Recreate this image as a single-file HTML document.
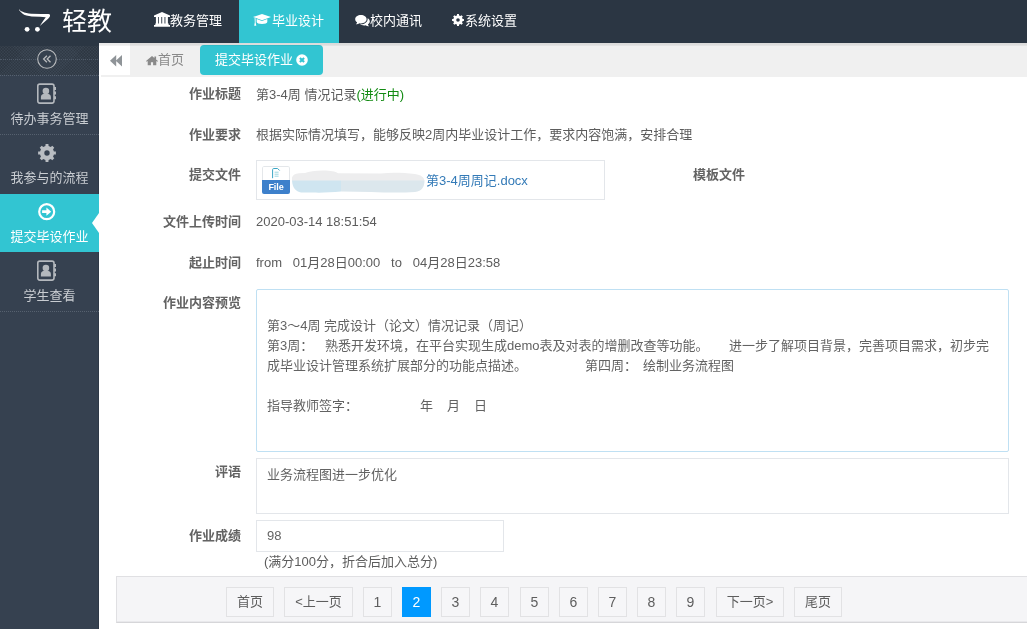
<!DOCTYPE html>
<html lang="zh-CN">
<head>
<meta charset="utf-8">
<title>轻教</title>
<style>
*{box-sizing:border-box;margin:0;padding:0}
html,body{width:1027px;height:629px;overflow:hidden;background:#fff}
body{will-change:transform;font-family:"Liberation Sans","Noto Sans CJK SC",sans-serif;font-size:13px;color:#555;position:relative}
svg{display:block;position:absolute;overflow:visible}
/* header */
#hdr{position:absolute;left:0;top:0;width:1027px;height:43px;background:#2b3643}
#logo{position:absolute;left:62px;top:1px;height:43px;line-height:41px;font-size:25px;color:#fff}
.nav{position:absolute;top:0;height:43px;color:#fff;font-size:13px;white-space:nowrap}
.nav span{position:absolute;top:0;line-height:41px}
.nav.on{background:#32c5d2}
/* sidebar */
#side{position:absolute;left:0;top:43px;width:99px;height:586px;background:#364150}
#side .edge{position:absolute;left:98px;top:0;width:1px;height:586px;background:#2f3947}
.sitem{position:absolute;left:0;width:99px;height:59px;border-bottom:1px dotted #56616f;color:#c8ccd1;text-align:center;font-size:13px}
.sitem .t{position:absolute;left:0;width:99px;top:33px;line-height:20px;white-space:nowrap}
.sitem.on{background:#32c5d2;color:#fff;border-bottom:none;height:58px}
.sitem.on:after{content:"";position:absolute;right:0;top:19px;border-right:7px solid #fff;border-top:10.5px solid transparent;border-bottom:10.5px solid transparent}
/* tabs */
#tabs{position:absolute;left:99px;top:43px;width:928px;height:34px;background:#f0f0f0}
#tabs:after{content:"";position:absolute;left:0;top:32px;width:2px;height:2px;background:#fff}
#tabs .sh{position:absolute;left:0;top:0;width:928px;height:3px;z-index:3;background:linear-gradient(rgba(0,0,0,.09) 0,rgba(0,0,0,.08) 67%,rgba(0,0,0,.03) 100%)}
#tabs .back{position:absolute;left:0;top:0;width:31px;height:32px;background:#fff}
#tabs .home{position:absolute;left:59px;top:2px;line-height:30px;color:#8a8a8a;font-size:13px;white-space:nowrap}
#tabs .act{position:absolute;left:101px;top:2px;width:123px;height:30px;border-radius:4px;background:#32c5d2;color:#fff;line-height:29px;padding-left:15px;font-size:13px;white-space:nowrap}
/* form */
.lbl{position:absolute;left:100px;width:141px;text-align:right;font-weight:bold;color:#636363;font-size:13px;line-height:20px;white-space:nowrap}
.val{position:absolute;left:256px;color:#5c5c5c;font-size:13px;line-height:20px;white-space:nowrap}
.box{position:absolute;border:1px solid #e3e6ea;background:#fff}
.box .ln{position:absolute;white-space:nowrap;line-height:20px;font-size:13px;color:#636363}
/* pager */
#pager{position:absolute;left:116px;top:576px;width:911px;height:47px;background:#f5f5f7;border:1px solid #e0e0e3;border-right:none;border-bottom-color:#d6d6d9;box-shadow:inset 0 -1px 0 #e9e9ec}
.pg{position:absolute;top:587px;height:30px;line-height:28px;border:1px solid #e2e2e4;background:#f6f6f8;color:#5e5e5e;font-size:13px;text-align:center;white-space:nowrap}
.pg.on{background:#0099ff;border-color:#0099ff;color:#fff}
.pg.n{font-size:14px;line-height:29px}
</style>
</head>
<body>
<div id="hdr">
  <svg style="left:14px;top:4px" width="44" height="34" viewBox="14 4 44 34"><path fill="#fff" d="M18.9 8.9 C20 10.3 21 11 22.1 11.5 C23.5 12.3 25 12.7 26.4 13 C28 13.4 29.8 13.6 31.3 13.7 L41 13.9 L47.3 13.9 C49 13.9 50.2 14.3 50.1 15.3 C50 16 49.9 16.4 49.6 17 C48.8 18.2 47.5 19.3 46.4 20.3 L39.8 26 C41 24.3 42.2 22.5 43.2 20.8 C44.2 19.4 45.3 18.2 45.7 17.3 C44 16.9 42 16.8 39.9 16.7 L31.8 16.4 C30 16.3 28.2 16.1 26.4 15.6 C24.8 15.1 23.3 14.3 22.1 13.2 C21 12.3 20 11.4 19.4 10.5 C19.1 10 18.9 9.4 18.9 8.9Z"/><circle cx="27.1" cy="29.3" r="2.4" fill="#fff"/><circle cx="37.4" cy="29.3" r="2.4" fill="#fff"/></svg>
  <div id="logo">轻教</div>

  <div class="nav" style="left:139px;width:100px">
    <svg style="left:14.8px;top:12.4px" width="16" height="15" viewBox="0 0 16 15"><path fill="#fff" d="M8 0 L16 3.6 V5 H0 V3.6Z M1.9 5 H4.2 V11.6 H1.9Z M5 5 H7.3 V11.6 H5Z M8.2 5 H10.5 V11.6 H8.2Z M11.4 5 H13.9 V11.6 H11.4Z M1.3 11.6 H14.7 V13.1 H1.3Z M0 13.1 H16 V14.7 H0Z"/></svg>
    <span style="left:31px">教务管理</span></div>
  <div class="nav on" style="left:239px;width:100px">
    <svg style="left:13.8px;top:14px" width="18" height="12" viewBox="0 0 18 12"><path fill="#fff" d="M9 0 L18 3 L9 6.2 L0 3Z M3.7 5 L9 6.9 L14.3 5 V8 C14.3 9.3 12 10 9 10 C6 10 3.7 9.3 3.7 8Z M1.6 4 L2.6 4.3 V8.2 L3.3 11.8 H1.2 L1.8 8.2Z"/></svg>
    <span style="left:33px">毕业设计</span></div>
  <div class="nav" style="left:339px;width:97px">
    <svg style="left:15.5px;top:14.6px" width="15" height="12" viewBox="0 0 15 12"><path fill="#fff" d="M5.9 0 C9.1 0 11.6 1.9 11.6 4.2 C11.6 6.5 9.1 8.4 5.9 8.4 C5.3 8.4 4.8 8.3 4.3 8.2 C3.5 8.8 2.3 9.3 1 9.3 C1.6 8.8 2 8.1 2.1 7.3 C0.9 6.5 0.2 5.4 0.2 4.2 C0.2 1.9 2.7 0 5.9 0Z M12.6 3.2 C13.9 3.9 14.8 5 14.8 6.3 C14.8 7.5 14.1 8.6 12.9 9.3 C13 10.1 13.4 10.8 14 11.3 C12.7 11.3 11.5 10.8 10.7 10.2 C10.2 10.3 9.7 10.4 9.1 10.4 C7.5 10.4 6.1 9.9 5.1 9.2 C5.4 9.2 5.6 9.3 5.9 9.3 C9.6 9.3 12.6 7 12.6 4.2 C12.6 3.9 12.6 3.5 12.6 3.2Z"/></svg>
    <span style="left:31px">校内通讯</span></div>
  <div class="nav" style="left:436px;width:97px">
    <svg style="left:15.9px;top:14.2px" width="12" height="12" viewBox="0 0 20 20"><path fill="#fff" fill-rule="evenodd" d="M17.70 8.22 L19.88 8.44 L19.88 11.56 L17.70 11.78 L16.70 14.18 L18.09 15.88 L15.88 18.09 L14.18 16.70 L11.78 17.70 L11.56 19.88 L8.44 19.88 L8.22 17.70 L5.82 16.70 L4.12 18.09 L1.91 15.88 L3.30 14.18 L2.30 11.78 L0.12 11.56 L0.12 8.44 L2.30 8.22 L3.30 5.82 L1.91 4.12 L4.12 1.91 L5.82 3.30 L8.22 2.30 L8.44 0.12 L11.56 0.12 L11.78 2.30 L14.18 3.30 L15.88 1.91 L18.09 4.12 L16.70 5.82Z M7.00 10.00 a3.00 3.00 0 1 0 6.00 0 a3.00 3.00 0 1 0 -6.00 0Z"/></svg>
    <span style="left:29px">系统设置</span></div>
</div>

<div id="side">
  <div class="edge"></div>
  <div class="sitem" style="top:0;height:33px"><div style="position:absolute;left:0;top:0;width:99px;height:3px;background:#2b3643"></div><div style="position:absolute;left:0;top:3px;width:98px;height:29px;background:#36414e;background-image:repeating-linear-gradient(45deg,rgba(0,0,0,.08) 0 1px,rgba(255,255,255,.012) 1px 2.1px),repeating-linear-gradient(-45deg,rgba(0,0,0,.08) 0 1px,rgba(255,255,255,.012) 1px 2.1px)"></div><div style="position:absolute;left:0;top:16px;width:98px;height:0;border-top:1px dotted #4f5a68"></div>
    <svg style="left:37px;top:6px" width="20" height="20" viewBox="0 0 20 20"><circle cx="10" cy="10" r="9.3" fill="#36414e" stroke="#b9bbbd" stroke-width="1.1"/><path d="M9.9 6.7 L6.6 10 L9.9 13.3 M13.5 6.7 L10.2 10 L13.5 13.3" fill="none" stroke="#b9bbbd" stroke-width="1.3"/></svg>
  </div>
  <div class="sitem" style="top:33px">
    <svg style="left:37px;top:7px" width="20" height="22" viewBox="0 0 20 22"><rect x="0.8" y="1.1" width="16.2" height="19" rx="2" fill="none" stroke="#b4b8bd" stroke-width="1.6"/><path fill="#b4b8bd" d="M17 4 h2 v3 h-2z M17 8.6 h2 v3 h-2z M17 13.2 h2 v3 h-2z"/><circle cx="8.9" cy="8" r="3.3" fill="#b4b8bd"/><path fill="#b4b8bd" d="M3.9 16.6 V14 C3.9 11.8 5.6 10.6 8.9 10.6 C12.2 10.6 13.9 11.8 13.9 14 V16.6Z"/></svg>
    <div class="t">待办事务管理</div></div>
  <div class="sitem" style="top:92px;border-bottom-color:transparent">
    <svg style="left:37.7px;top:8.9px" width="18" height="18" viewBox="0 0 20 20"><path fill="#b9bdc2" fill-rule="evenodd" d="M17.70 8.22 L19.88 8.44 L19.88 11.56 L17.70 11.78 L16.70 14.18 L18.09 15.88 L15.88 18.09 L14.18 16.70 L11.78 17.70 L11.56 19.88 L8.44 19.88 L8.22 17.70 L5.82 16.70 L4.12 18.09 L1.91 15.88 L3.30 14.18 L2.30 11.78 L0.12 11.56 L0.12 8.44 L2.30 8.22 L3.30 5.82 L1.91 4.12 L4.12 1.91 L5.82 3.30 L8.22 2.30 L8.44 0.12 L11.56 0.12 L11.78 2.30 L14.18 3.30 L15.88 1.91 L18.09 4.12 L16.70 5.82Z M7.00 10.00 a3.00 3.00 0 1 0 6.00 0 a3.00 3.00 0 1 0 -6.00 0Z"/></svg>
    <div class="t">我参与的流程</div></div>
  <div class="sitem on" style="top:151px">
    <svg style="left:38px;top:9px" width="18" height="18" viewBox="0 0 18 18"><circle cx="8.7" cy="8.7" r="7.5" fill="none" stroke="#fff" stroke-width="2.2"/><path fill="#fff" d="M4.1 7.3 H8.4 V4.6 L13.2 8.7 L8.4 12.8 V10.1 H4.1Z"/></svg>
    <div class="t">提交毕设作业</div></div>
  <div class="sitem" style="top:210px">
    <svg style="left:37px;top:7px" width="20" height="22" viewBox="0 0 20 22"><rect x="0.8" y="1.1" width="16.2" height="19" rx="2" fill="none" stroke="#b4b8bd" stroke-width="1.6"/><path fill="#b4b8bd" d="M17 4 h2 v3 h-2z M17 8.6 h2 v3 h-2z M17 13.2 h2 v3 h-2z"/><circle cx="8.9" cy="8" r="3.3" fill="#b4b8bd"/><path fill="#b4b8bd" d="M3.9 16.6 V14 C3.9 11.8 5.6 10.6 8.9 10.6 C12.2 10.6 13.9 11.8 13.9 14 V16.6Z"/></svg>
    <div class="t">学生查看</div></div>
</div>

<div id="tabs">
  <div class="sh"></div>
  <div class="back"><svg style="left:11px;top:11.6px" width="12" height="12" viewBox="0 0 12 12"><path fill="#8f9498" d="M6.2 0 V11.4 L0 5.7Z M12 0 V11.4 L5.8 5.7Z"/></svg></div>
  <svg style="left:47px;top:12.6px" width="12" height="9.4" viewBox="0 0 12 9.4"><path fill="#8a8a8a" d="M6 0 L8.4 2 V0.6 H10.1 V3.4 L12 5 L11.3 5.8 L10.3 5 V9.2 H7.1 V6.2 H4.9 V9.2 H1.7 V5 L0.7 5.8 L0 5Z"/></svg>
  <div class="home">首页</div>
  <div class="act">提交毕设作业
    <svg style="left:96.2px;top:9.2px" width="12" height="12" viewBox="0 0 12 12"><circle cx="6" cy="6" r="5.8" fill="#fff"/><path d="M3.9 3.9 L8.1 8.1 M8.1 3.9 L3.9 8.1" stroke="#32c5d2" stroke-width="2.1"/></svg>
  </div>
</div>

<div class="lbl" style="top:84px">作业标题</div>
<div class="val" style="top:85px">第3-4周 情况记录<span style="color:#128a12">(进行中)</span></div>
<div class="lbl" style="top:125px">作业要求</div>
<div class="val" style="top:125px">根据实际情况填写，能够反映2周内毕业设计工作，要求内容饱满，安排合理</div>
<div class="lbl" style="top:165px">提交文件</div>
<div class="box" style="left:256px;top:160px;width:349px;height:40px">
  <div style="position:absolute;left:5px;top:5px;width:28px;height:28px;border-radius:2px;background:#fff;overflow:hidden">
    <div style="position:absolute;left:0;top:0;width:28px;height:16px;border:1px solid #e4e7ea;border-bottom:none;border-radius:2px 2px 0 0"></div>
    <svg style="left:10px;top:2px" width="9" height="11" viewBox="0 0 9 11"><path d="M0.6 10.2 V1.6 C0.6 0.9 1 0.5 1.7 0.5 H5.6 L7.6 2.5" fill="none" stroke="#3aa5c4" stroke-width="1"/><path d="M2.6 4.2 H6.6 M2.6 6.2 H6.6 M2.6 8.2 H6.6" stroke="#8fd0dd" stroke-width="0.9"/></svg>
    <div style="position:absolute;left:0;top:14px;width:28px;height:14px;background:#3d80cb;color:#fff;font-weight:bold;font-size:9px;line-height:14px;text-align:center;letter-spacing:-0.1px">File</div>
  </div>
  <svg style="left:34px;top:6px" width="140" height="28" viewBox="0 0 140 28"><g filter="url(#bl)"><path fill="#ededee" d="M1 10.5 C2 8 4 6.5 8 6.2 L14 6 C18 4.5 24 3.6 32 3.6 C40 3.6 44 4.6 47 6.2 L90 6.4 C100 5.4 112 5.6 124 7 C130 8 133 10 133.5 14 L1 14Z"/><path fill="#cfe5f0" d="M1 13.5 L50 13.5 L50 24.6 C40 25.6 30 25.8 22 25.6 L10 25.4 C5 24.8 1.5 21 1 13.5Z"/><path fill="#dce7ed" d="M50 13.5 L133.5 13.5 C133.5 20 131 24 124 25 C110 26 95 25.6 80 25 L50 24.6Z"/></g><defs><filter id="bl" x="-5%" y="-20%" width="110%" height="140%"><feGaussianBlur stdDeviation="0.5"/></filter></defs></svg>
  <div style="position:absolute;left:169px;top:10px;line-height:20px;color:#337ab7;font-size:13px;white-space:nowrap">第3-4周周记.docx</div>
</div>
<div class="lbl" style="top:165px;left:604px">模板文件</div>
<div class="lbl" style="top:212px">文件上传时间</div>
<div class="val" style="top:212px">2020-03-14 18:51:54</div>
<div class="lbl" style="top:253px">起止时间</div>
<div class="val" style="top:253px">from&nbsp;&nbsp; 01月28日00:00&nbsp;&nbsp; to&nbsp;&nbsp; 04月28日23:58</div>
<div class="lbl" style="top:293px">作业内容预览</div>
<div class="box" style="left:256px;top:289px;width:753px;height:163px;border-color:#bfe0f3;border-radius:2px">
  <div class="ln" style="left:10px;top:26px">第3～4周 完成设计（论文）情况记录（周记）</div>
  <div class="ln" style="left:10px;top:46px">第3周：</div>
  <div class="ln" style="left:68px;top:46px">熟悉开发环境，在平台实现生成demo表及对表的增删改查等功能。</div>
  <div class="ln" style="left:472px;top:46px">进一步了解项目背景，完善项目需求，初步完</div>
  <div class="ln" style="left:10px;top:66px">成毕业设计管理系统扩展部分的功能点描述。</div>
  <div class="ln" style="left:328px;top:66px">第四周：</div>
  <div class="ln" style="left:386px;top:66px">绘制业务流程图</div>
  <div class="ln" style="left:10px;top:106px">指导教师签字：</div>
  <div class="ln" style="left:163px;top:106px">年</div>
  <div class="ln" style="left:190px;top:106px">月</div>
  <div class="ln" style="left:217px;top:106px">日</div>
</div>
<div class="lbl" style="top:462px">评语</div>
<div class="box" style="left:256px;top:458px;width:753px;height:56px"><div class="ln" style="left:10px;top:6px">业务流程图进一步优化</div></div>
<div class="lbl" style="top:526px">作业成绩</div>
<div class="box" style="left:256px;top:520px;width:248px;height:32px"><div class="ln" style="left:10px;top:5px">98</div></div>
<div class="val" style="top:552px;left:264px">(满分100分，折合后加入总分)</div>

<div id="pager"></div>
<div class="pg" style="left:226px;width:48px">首页</div>
<div class="pg" style="left:284px;width:69px">&lt;上一页</div>
<div class="pg n" style="left:363px;width:29px">1</div>
<div class="pg n on" style="left:402px;width:29px">2</div>
<div class="pg n" style="left:441px;width:29px">3</div>
<div class="pg n" style="left:480px;width:29px">4</div>
<div class="pg n" style="left:520px;width:29px">5</div>
<div class="pg n" style="left:559px;width:29px">6</div>
<div class="pg n" style="left:598px;width:29px">7</div>
<div class="pg n" style="left:637px;width:29px">8</div>
<div class="pg n" style="left:676px;width:29px">9</div>
<div class="pg" style="left:716px;width:68px">下一页&gt;</div>
<div class="pg" style="left:794px;width:48px">尾页</div>
</body>
</html>
